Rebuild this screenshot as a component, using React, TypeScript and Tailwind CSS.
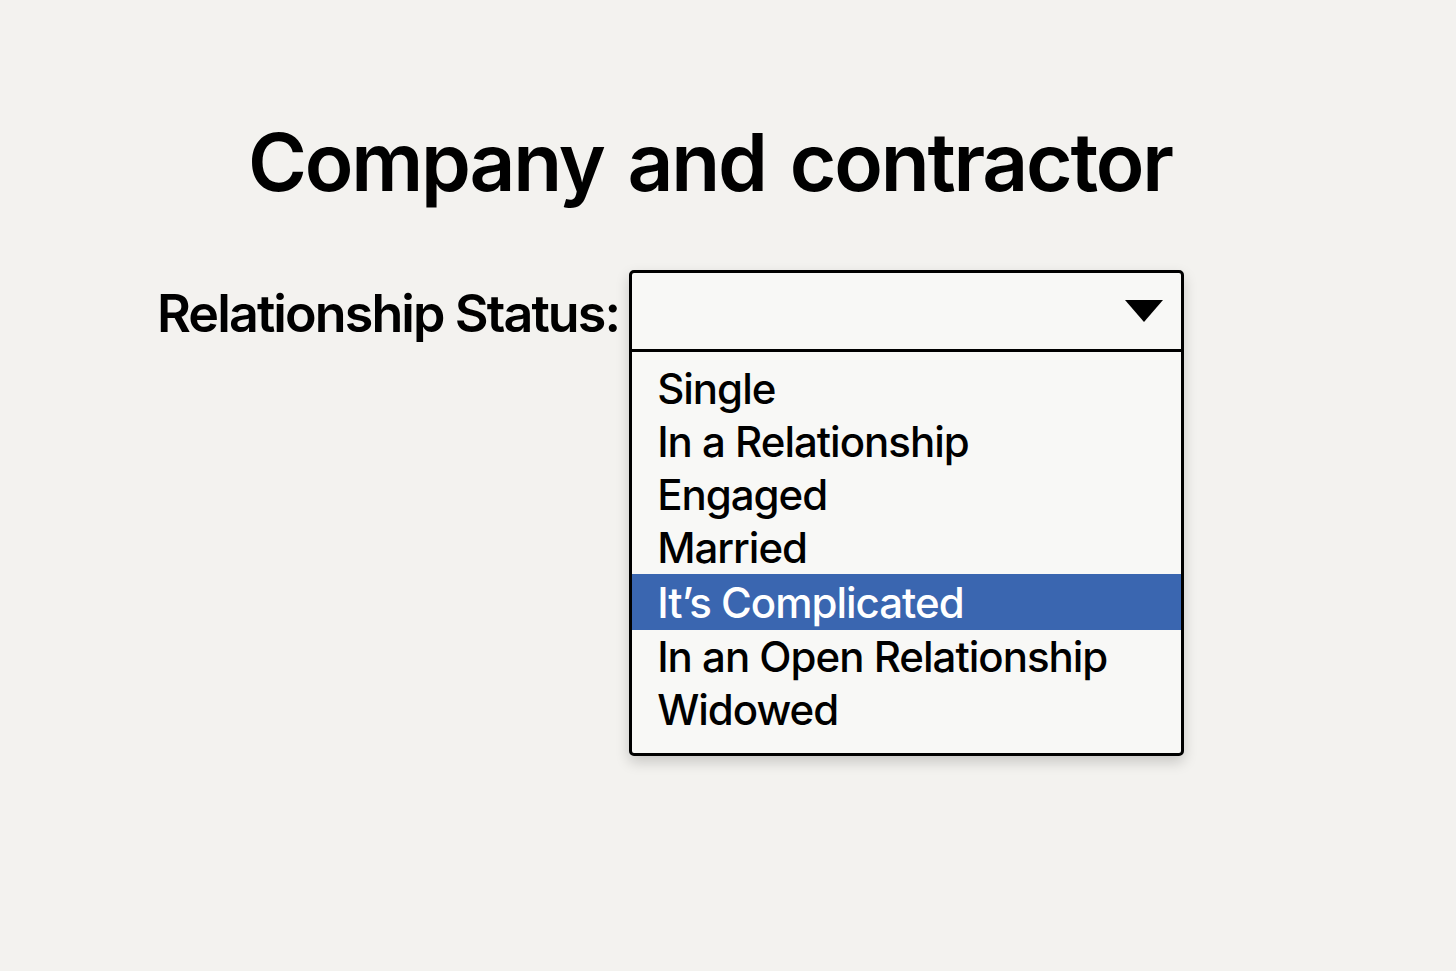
const options = [
  "Single",
  "In a Relationship",
  "Engaged",
  "Married",
  "It’s Complicated",
  "In an Open Relationship",
  "Widowed",
];

export default function App() {
  const selected = 4;

  return (
    <div className="min-h-screen w-full bg-[#f3f2ef] font-['Inter',sans-serif] text-black">
      <h1 className="pl-[248px] pt-[118px] text-[80px] font-semibold leading-[88px] tracking-[-2.2px] [word-spacing:6px]">
        Company and contractor
      </h1>

      <div className="mt-[64px] flex items-start pl-[157px]">
        <label className="mt-[12px] text-[52px] font-semibold leading-[64px] tracking-[-1.9px]">
          Relationship Status:
        </label>

        <div className="ml-[10px] w-[555px] overflow-hidden rounded-[5px] border-[3px] border-black bg-[#f8f8f6] shadow-[0_6px_14px_rgba(0,0,0,0.18)]">
          <div className="flex h-[79px] items-center justify-end border-b-[3px] border-black pr-[17px]">
            <svg width="40" height="24" viewBox="0 0 40 24">
              <path d="M1 1 L39 1 L20 23 Z" fill="black" />
            </svg>
          </div>

          <ul className="pt-[10px] pb-[17px]">
            {options.map((option, index) => (
              <li
                key={option}
                className={
                  index === selected
                    ? "flex h-[56px] items-center bg-[#3a66b0] pl-[25px] text-[42px] font-medium tracking-[-1px] text-white"
                    : "flex h-[53px] items-center pl-[25px] text-[42px] font-medium tracking-[-1px] text-black"
                }
              >
                {option}
              </li>
            ))}
          </ul>
        </div>
      </div>
    </div>
  );
}
